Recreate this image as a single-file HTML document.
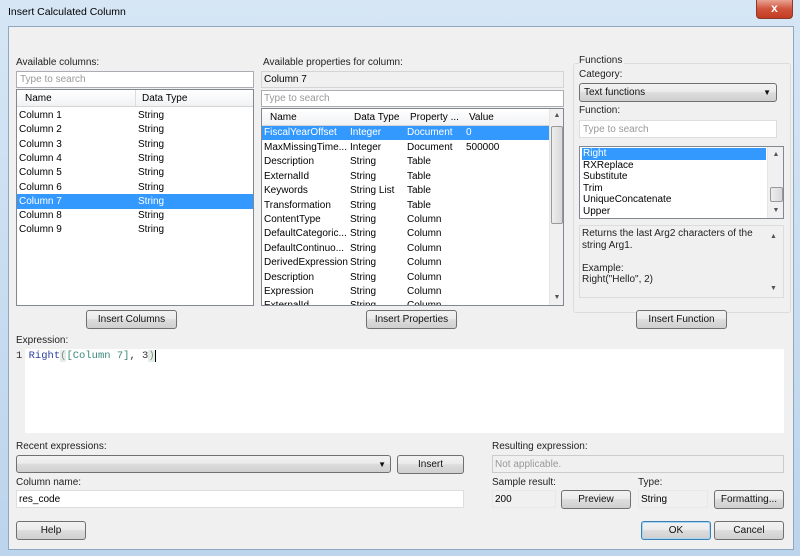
<!DOCTYPE html>
<html><head><meta charset="utf-8"><style>
*{box-sizing:border-box;margin:0;padding:0}
body{width:800px;height:556px;overflow:hidden;background:#c3d9ee;font-family:"Liberation Sans",sans-serif;font-size:10px;color:#000;position:relative}
.a{position:absolute}
.frame{left:0;top:0;width:800px;height:556px;background:linear-gradient(#d6e6f5,#bcd4ec)}
.body{left:8px;top:26px;width:786px;height:524px;background:#f0f0f0;border:1px solid #8fa7c0}
.lbl{position:absolute;color:#222;white-space:nowrap}
.box{position:absolute;background:#fff;border:1px solid #abadb3}
.ro{position:absolute;background:#f0f0f0;border:1px solid #d5d5d5}
.ph{color:#999}
.btn{position:absolute;border:1px solid #707070;border-radius:3px;background:linear-gradient(#f2f2f2 0%,#ebebeb 45%,#dddddd 50%,#cfcfcf 100%);text-align:center;line-height:17px;color:#111}
.hdr{position:absolute;background:linear-gradient(#fff,#f1f2f4);border-bottom:1px solid #d5d5d5;height:17px}
.hdr span{position:absolute;top:3px}
.row{position:absolute;height:14px;line-height:14px;white-space:nowrap}
.row span{position:absolute}
.sel{background:#3399ff;color:#fff}
.sb{position:absolute;background:#f0f0f0;border-left:1px solid #e5e5e5}
.thumb{position:absolute;background:linear-gradient(90deg,#eee,#d8d8d8);border:1px solid #999;border-radius:2px}
.arr{position:absolute;font-size:7px;color:#555;text-align:center}
</style></head><body>
<div class="a frame"></div>
<div class="lbl" style="left:8px;top:6px;font-size:10.5px;color:#000">Insert Calculated Column</div>
<div class="a" style="left:756px;top:0;width:37px;height:19px;border:1px solid #8a3a2c;border-top:none;border-radius:0 0 4px 4px;background:linear-gradient(#e8a493,#d0533b 50%,#c23c22);color:#fff;text-align:center;font-weight:bold;font-size:12px;line-height:17px">x</div>
<div class="a body"></div>

<!-- Left column -->
<div class="lbl" style="left:16px;top:57px">Available columns:</div>
<div class="box" style="left:16px;top:71px;width:238px;height:17px"><span class="a ph" style="left:3px;top:2px">Type to search</span></div>
<div class="box" style="left:16px;top:89px;width:238px;height:217px;border-color:#828790">
 <div class="hdr" style="left:0;top:0;width:236px"><span style="left:8px">Name</span><span style="left:125px">Data Type</span><span class="a" style="left:118px;top:0;width:1px;height:16px;background:#ddd"></span></div>
 <div class="row" style="left:0;top:19px;width:236px"><span style="left:2px">Column 1</span><span style="left:121px">String</span></div>
 <div class="row" style="left:0;top:33.3px;width:236px"><span style="left:2px">Column 2</span><span style="left:121px">String</span></div>
 <div class="row" style="left:0;top:47.6px;width:236px"><span style="left:2px">Column 3</span><span style="left:121px">String</span></div>
 <div class="row" style="left:0;top:61.9px;width:236px"><span style="left:2px">Column 4</span><span style="left:121px">String</span></div>
 <div class="row" style="left:0;top:76.2px;width:236px"><span style="left:2px">Column 5</span><span style="left:121px">String</span></div>
 <div class="row" style="left:0;top:90.5px;width:236px"><span style="left:2px">Column 6</span><span style="left:121px">String</span></div>
 <div class="row sel" style="left:0;top:104px;width:236px;height:15px;line-height:15px"><span style="left:2px">Column 7</span><span style="left:121px">String</span></div>
 <div class="row" style="left:0;top:119px;width:236px"><span style="left:2px">Column 8</span><span style="left:121px">String</span></div>
 <div class="row" style="left:0;top:133.4px;width:236px"><span style="left:2px">Column 9</span><span style="left:121px">String</span></div>
</div>
<div class="btn" style="left:86px;top:310px;width:91px;height:19px">Insert Columns</div>

<!-- Middle -->
<div class="lbl" style="left:263px;top:57px">Available properties for column:</div>
<div class="ro" style="left:261px;top:71px;width:303px;height:17px"><span class="a" style="left:2px;top:2px">Column 7</span></div>
<div class="box" style="left:261px;top:90px;width:303px;height:17px"><span class="a ph" style="left:2px;top:2px">Type to search</span></div>
<div class="box" style="left:261px;top:108px;width:303px;height:198px;border-color:#828790;overflow:hidden">
 <div class="hdr" style="left:0;top:0;width:287px"><span style="left:8px">Name</span><span style="left:92px">Data Type</span><span style="left:148px">Property ...</span><span style="left:207px">Value</span></div>
 <div class="row sel" style="left:0;top:17px;width:287px"><span style="left:2px">FiscalYearOffset</span><span style="left:88px">Integer</span><span style="left:145px">Document</span><span style="left:204px">0</span></div>
 <div class="row" style="left:0;top:32px"><span style="left:2px">MaxMissingTime...</span><span style="left:88px">Integer</span><span style="left:145px">Document</span><span style="left:204px">500000</span></div>
 <div class="row" style="left:0;top:46.4px"><span style="left:2px">Description</span><span style="left:88px">String</span><span style="left:145px">Table</span></div>
 <div class="row" style="left:0;top:60.8px"><span style="left:2px">ExternalId</span><span style="left:88px">String</span><span style="left:145px">Table</span></div>
 <div class="row" style="left:0;top:75.2px"><span style="left:2px">Keywords</span><span style="left:88px">String List</span><span style="left:145px">Table</span></div>
 <div class="row" style="left:0;top:89.6px"><span style="left:2px">Transformation</span><span style="left:88px">String</span><span style="left:145px">Table</span></div>
 <div class="row" style="left:0;top:104px"><span style="left:2px">ContentType</span><span style="left:88px">String</span><span style="left:145px">Column</span></div>
 <div class="row" style="left:0;top:118.4px"><span style="left:2px">DefaultCategoric...</span><span style="left:88px">String</span><span style="left:145px">Column</span></div>
 <div class="row" style="left:0;top:132.8px"><span style="left:2px">DefaultContinuo...</span><span style="left:88px">String</span><span style="left:145px">Column</span></div>
 <div class="row" style="left:0;top:147.2px"><span style="left:2px">DerivedExpression</span><span style="left:88px">String</span><span style="left:145px">Column</span></div>
 <div class="row" style="left:0;top:161.6px"><span style="left:2px">Description</span><span style="left:88px">String</span><span style="left:145px">Column</span></div>
 <div class="row" style="left:0;top:176px"><span style="left:2px">Expression</span><span style="left:88px">String</span><span style="left:145px">Column</span></div>
 <div class="row" style="left:0;top:190.4px"><span style="left:2px">ExternalId</span><span style="left:88px">String</span><span style="left:145px">Column</span></div>
 <div class="sb" style="left:287px;top:0;width:14px;height:196px"><div class="arr" style="left:0;top:3px;width:14px">▲</div><div class="thumb" style="left:1px;top:17px;width:12px;height:98px"></div><div class="arr" style="left:0;top:185px;width:14px">▼</div></div>
</div>
<div class="btn" style="left:366px;top:310px;width:91px;height:19px">Insert Properties</div>

<!-- Functions -->
<div class="a" style="left:573px;top:63px;width:218px;height:250px;border:1px solid #dcdcdc;border-radius:3px"></div>
<div class="lbl" style="left:579px;top:55px;background:#f0f0f0;padding-right:2px">Functions</div>
<div class="lbl" style="left:579px;top:69px">Category:</div>
<div class="btn" style="left:579px;top:83px;width:198px;height:19px;text-align:left;padding-left:4px;border-radius:3px">Text functions<span class="a" style="right:5px;top:0;font-size:8px">▼</span></div>
<div class="lbl" style="left:579px;top:105px">Function:</div>
<div class="box" style="left:579px;top:120px;width:198px;height:18px;border-color:#ddd"><span class="a ph" style="left:3px;top:3px">Type to search</span></div>
<div class="box" style="left:579px;top:146px;width:205px;height:73px;border-color:#828790;overflow:hidden">
 <div class="row sel" style="left:2px;top:1px;width:184px;height:12px;line-height:12px"><span style="left:1px">Right</span></div>
 <div class="row" style="left:2px;top:12.5px;height:12px;line-height:12px"><span style="left:1px">RXReplace</span></div>
 <div class="row" style="left:2px;top:24px;height:12px;line-height:12px"><span style="left:1px">Substitute</span></div>
 <div class="row" style="left:2px;top:35.5px;height:12px;line-height:12px"><span style="left:1px">Trim</span></div>
 <div class="row" style="left:2px;top:47px;height:12px;line-height:12px"><span style="left:1px">UniqueConcatenate</span></div>
 <div class="row" style="left:2px;top:58.5px;height:12px;line-height:12px"><span style="left:1px">Upper</span></div>
 <div class="sb" style="left:187px;top:0;width:16px;height:71px"><div class="arr" style="left:0;top:4px;width:16px">▲</div><div class="thumb" style="left:2px;top:40px;width:13px;height:15px"></div><div class="arr" style="left:0;top:60px;width:16px">▼</div></div>
</div>
<div class="a" style="left:579px;top:225px;width:205px;height:73px;border:1px solid #dcdcdc;background:#f0f0f0"></div>
<div class="lbl" style="left:582px;top:228px;line-height:11.5px;white-space:normal;width:188px">Returns the last Arg2 characters of the string Arg1.<br><br>Example:<br>Right("Hello", 2)</div>
<div class="arr" style="left:770px;top:233px">▲</div><div class="arr" style="left:770px;top:285px">▼</div>
<div class="btn" style="left:636px;top:310px;width:91px;height:19px">Insert Function</div>

<!-- Expression -->
<div class="lbl" style="left:16px;top:335px">Expression:</div>
<div class="a" style="left:25px;top:349px;width:759px;height:84px;background:#fff"></div>
<div class="lbl" style="left:16px;top:350px;font-family:'Liberation Mono',monospace;font-size:10.5px;color:#333">1 <span style="color:#2b3fa0">Right</span><span style="background:#e3efe6;color:#888">(</span><span style="color:#3a8a7a">[Column 7]</span>, 3<span style="background:#e3efe6;color:#888">)</span><span style="border-left:1px solid #000"></span></div>

<!-- Bottom left -->
<div class="lbl" style="left:16px;top:441px">Recent expressions:</div>
<div class="btn" style="left:16px;top:455px;width:375px;height:18px;border-radius:3px"><span class="a" style="right:4px;top:0;font-size:8px">▼</span></div>
<div class="btn" style="left:397px;top:455px;width:67px;height:19px">Insert</div>
<div class="lbl" style="left:16px;top:477px">Column name:</div>
<div class="box" style="left:16px;top:490px;width:448px;height:18px;border-color:#ddd"><span class="a" style="left:2px;top:3px">res_code</span></div>
<div class="btn" style="left:16px;top:521px;width:70px;height:19px">Help</div>

<!-- Bottom right -->
<div class="lbl" style="left:492px;top:441px">Resulting expression:</div>
<div class="ro" style="left:492px;top:455px;width:292px;height:18px;border-color:#ccc"><span class="a ph" style="left:2px;top:3px">Not applicable.</span></div>
<div class="lbl" style="left:492px;top:477px">Sample result:</div>
<div class="ro" style="left:492px;top:490px;width:64px;height:18px;border-color:#e8e8e8"><span class="a" style="left:2px;top:3px">200</span></div>
<div class="btn" style="left:561px;top:490px;width:70px;height:19px">Preview</div>
<div class="lbl" style="left:638px;top:477px">Type:</div>
<div class="ro" style="left:638px;top:490px;width:70px;height:18px;border-color:#e8e8e8"><span class="a" style="left:2px;top:3px">String</span></div>
<div class="btn" style="left:714px;top:490px;width:70px;height:19px">Formatting...</div>
<div class="btn" style="left:641px;top:521px;width:70px;height:19px;border-color:#3c7fb1;box-shadow:inset 0 0 0 1px #a6d6f2">OK</div>
<div class="btn" style="left:714px;top:521px;width:70px;height:19px">Cancel</div>
</body></html>
